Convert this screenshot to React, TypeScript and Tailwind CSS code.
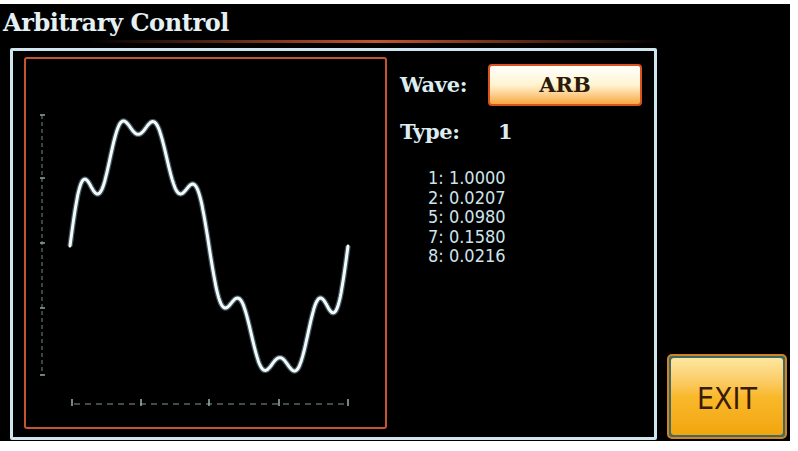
import React from 'react'

const harmonics: [number, number][] = [
  [1, 1.0],
  [2, 0.0207],
  [5, 0.098],
  [7, 0.158],
  [8, 0.0216],
]

function wavePoints() {
  const n = 400
  const vals: number[] = []
  for (let i = 0; i <= n; i++) {
    const t = (i / n) * Math.PI * 2
    let v = 0
    for (const [h, a] of harmonics) v += a * Math.sin(h * t)
    vals.push(v)
  }
  const max = Math.max(...vals.map(Math.abs))
  const x0 = 46
  const x1 = 324
  const cy = 189
  const amp = 125
  return vals
    .map((v, i) => `${(x0 + ((x1 - x0) * i) / n).toFixed(1)},${(cy - (v / max) * amp).toFixed(1)}`)
    .join(' ')
}

function WaveChart() {
  const yTicks = [58, 121, 186, 251, 318]
  const xMajor = [48, 117, 185, 255, 324]
  const pts = wavePoints()
  return (
    <svg width="359" height="368" viewBox="2 2 359 368" className="block">
      {/* y axis */}
      <line x1="18" y1="58" x2="18" y2="318" stroke="#6f8a88" strokeWidth="1" strokeDasharray="4 3" />
      {yTicks.map((y) => (
        <line key={y} x1="16" y1={y} x2="21" y2={y} stroke="#8aa6a4" strokeWidth="1.5" />
      ))}
      {/* x axis */}
      <line x1="48" y1="347" x2="324" y2="347" stroke="#7f9a98" strokeWidth="1.2" strokeDasharray="6 5" strokeDashoffset="-2" />
      {xMajor.map((x) => (
        <line key={x} x1={x} y1="342" x2={x} y2="349" stroke="#9ab4b2" strokeWidth="1.5" />
      ))}
      {/* waveform */}
      <polyline points={pts} fill="none" stroke="#9fd0e0" strokeWidth="5.5" strokeOpacity="0.4" strokeLinejoin="round" />
      <polyline points={pts} fill="none" stroke="#f2fafc" strokeWidth="3" strokeLinejoin="round" strokeLinecap="round" />
    </svg>
  )
}

export default function App() {
  const coeffs = [
    ['1', '1.0000'],
    ['2', '0.0207'],
    ['5', '0.0980'],
    ['7', '0.1580'],
    ['8', '0.0216'],
  ]

  return (
    <div className="w-[798px] h-[451px] bg-white overflow-hidden">
      <div className="relative w-[790px] h-[437px] mt-[4px] bg-black" style={{ fontFamily: '"DejaVu Serif", serif' }}>
        {/* title */}
        <div className="h-[36px] pl-[3px] pt-[3px] text-[24px] font-bold leading-[32px] text-[#e4f0f4] tracking-[-0.4px]">
          Arbitrary Control
        </div>
        {/* orange rule */}
        <div className="ml-[90px] w-[570px] h-[3px] bg-gradient-to-r from-transparent via-[#c4552e] to-transparent" />

        <div className="flex mt-[5px] ml-[10px]">
          {/* main panel */}
          <div className="w-[647px] h-[392px] border-[3px] border-[#cfe6ee] rounded-[2px] pl-[11px] pt-[6px] flex">
            <div className="w-[363px] h-[372px] border-2 border-[#c4552e] rounded-[3px] shrink-0">
              <WaveChart />
            </div>

            <div className="ml-[13px] flex flex-col">
              <div className="flex items-center h-[44px] mt-[6px]">
                <div className="w-[88px] text-[21px] font-bold text-[#dcecf0] tracking-[-0.3px]">Wave:</div>
                <div className="w-[154px] h-[42px] rounded-[4px] border-2 border-[#d8541e] bg-gradient-to-b from-white via-[#fff3d0] to-[#f7a838] flex items-center justify-center text-[21px] font-bold text-[#2a1a08]">
                  ARB
                </div>
              </div>
              <div className="flex items-center h-[30px] mt-[10px]">
                <div className="w-[98px] text-[21px] font-bold text-[#dcecf0] tracking-[-0.3px]">Type:</div>
                <div className="text-[21px] font-bold text-[#dcecf0]">1</div>
              </div>
              <div
                className="mt-[21px] ml-[28px] text-[18px] leading-[19.5px] text-[#cfe4ec]"
                style={{ fontFamily: '"DejaVu Sans Condensed", "DejaVu Sans", sans-serif', fontStretch: 'condensed' }}
              >
                {coeffs.map(([h, v]) => (
                  <div key={h}>
                    {h}: {v}
                  </div>
                ))}
              </div>
            </div>
          </div>

          {/* exit */}
          <div className="flex flex-col justify-end ml-[10px] pb-[1px]">
            <div className="w-[120px] h-[85px] rounded-[5px] border-2 border-[#d8821e] p-[2px] bg-[#3a6a6a]">
              <div
                className="w-full h-full rounded-[3px] bg-gradient-to-b from-[#fde7a0] via-[#f9b92a] to-[#f2a50c] flex items-center justify-center text-[30px] text-[#3a1a08] pt-[4px]"
                style={{ fontFamily: '"DejaVu Sans Condensed", "DejaVu Sans", sans-serif', fontStretch: 'condensed' }}
              >
                EXIT
              </div>
            </div>
          </div>
        </div>
      </div>
    </div>
  )
}
